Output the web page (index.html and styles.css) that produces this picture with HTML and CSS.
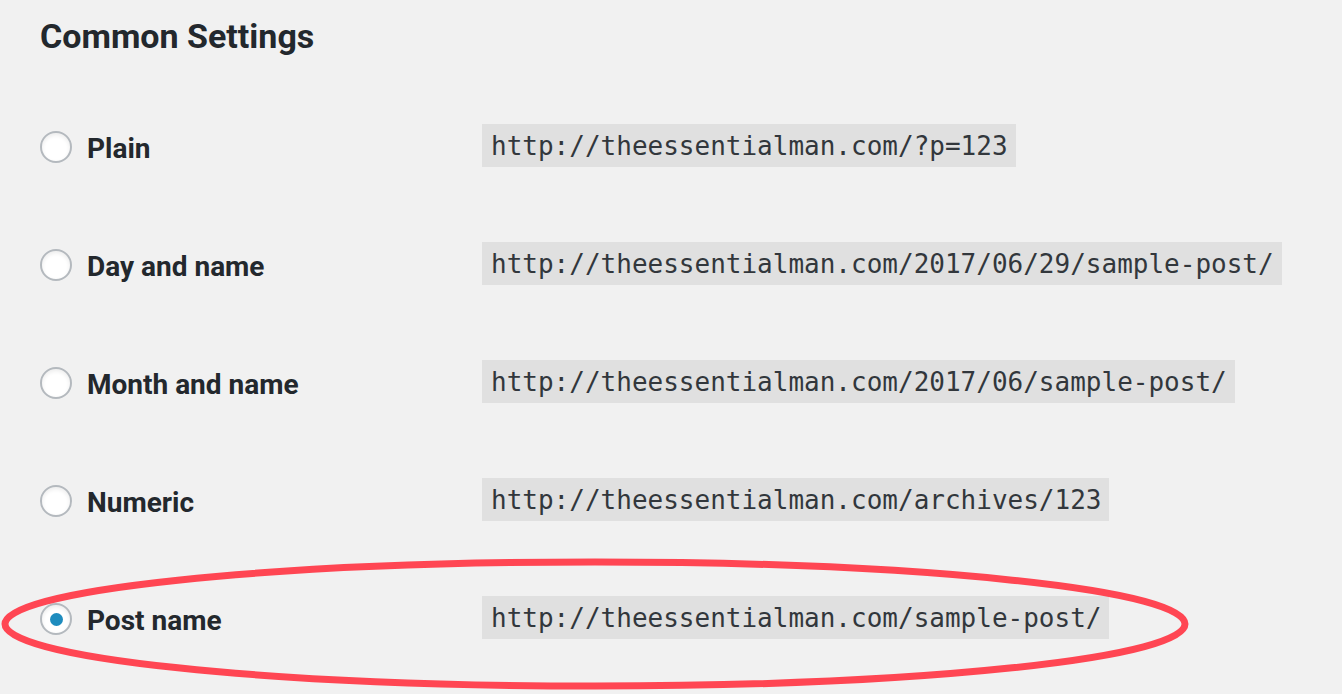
FILE: index.html
```html
<!DOCTYPE html>
<html lang="en">
<head>
<meta charset="utf-8">
<title>Common Settings</title>
<link rel="stylesheet" href="styles.css">
</head>
<body>
<main class="page">
  <h2 class="title">Common Settings</h2>
  <div class="options">
    <label class="row">
      <span class="choice"><input class="radio" type="radio" name="p"><span class="label">Plain</span></span>
      <code class="url">http://theessentialman.com/?p=123</code>
    </label>
    <label class="row">
      <span class="choice"><input class="radio" type="radio" name="p"><span class="label">Day and name</span></span>
      <code class="url">http://theessentialman.com/2017/06/29/sample-post/</code>
    </label>
    <label class="row">
      <span class="choice"><input class="radio" type="radio" name="p"><span class="label">Month and name</span></span>
      <code class="url">http://theessentialman.com/2017/06/sample-post/</code>
    </label>
    <label class="row">
      <span class="choice"><input class="radio" type="radio" name="p"><span class="label">Numeric</span></span>
      <code class="url">http://theessentialman.com/archives/123</code>
    </label>
    <label class="row">
      <span class="choice"><input class="radio" type="radio" name="p" checked><span class="label">Post name</span></span>
      <code class="url">http://theessentialman.com/sample-post/</code>
    </label>
  </div>
  <svg class="marker" width="1342" height="694" viewBox="0 0 1342 694" aria-hidden="true">
    <ellipse cx="595" cy="624" rx="590" ry="62" fill="none" stroke="#ff4653" stroke-width="7"/>
  </svg>
</main>
</body>
</html>
```
FILE: styles.css
```css
html, body {
  margin: 0;
  padding: 0;
  background: #f1f1f1;
}
body {
  width: 1342px;
  height: 694px;
  overflow: hidden;
  font-family: Roboto, "Liberation Sans", Arial, sans-serif;
  color: #23282d;
}
.page {
  position: relative;
  padding: 16px 0 0 40px;
  height: 694px;
  box-sizing: border-box;
}
.title {
  margin: 0 0 32px 0;
  font-size: 34px;
  line-height: 40px;
  font-weight: 700;
  color: #23282d;
}
.options {
  display: flex;
  flex-direction: column;
}
.row {
  display: grid;
  grid-template-columns: 442px auto;
  align-items: center;
  justify-items: start;
  height: 118px;
}
.choice {
  display: flex;
  align-items: center;
  gap: 15px;
}
.radio {
  appearance: none;
  -webkit-appearance: none;
  margin: 0;
  width: 32px;
  height: 32px;
  border-radius: 50%;
  border: 2px solid #b4b9be;
  background: #fff;
  box-shadow: inset 0 2px 4px rgba(0,0,0,0.08);
  box-sizing: border-box;
  display: grid;
  place-items: center;
  flex: none;
}
.radio:checked::before {
  content: "";
  width: 13px;
  height: 13px;
  border-radius: 50%;
  background: #1e8cbe;
}
.label {
  font-size: 28px;
  font-weight: 700;
  line-height: 34px;
  padding-top: 3px;
  color: #23282d;
}
.url {
  font-family: "DejaVu Sans Mono", Menlo, monospace;
  font-size: 26px;
  line-height: 42px;
  padding: 1px 8px 0 9px;
  margin-bottom: 4px;
  background: #e0e0e0;
  color: #32373c;
}
.marker {
  position: absolute;
  left: 0;
  top: 0;
  pointer-events: none;
}
```
